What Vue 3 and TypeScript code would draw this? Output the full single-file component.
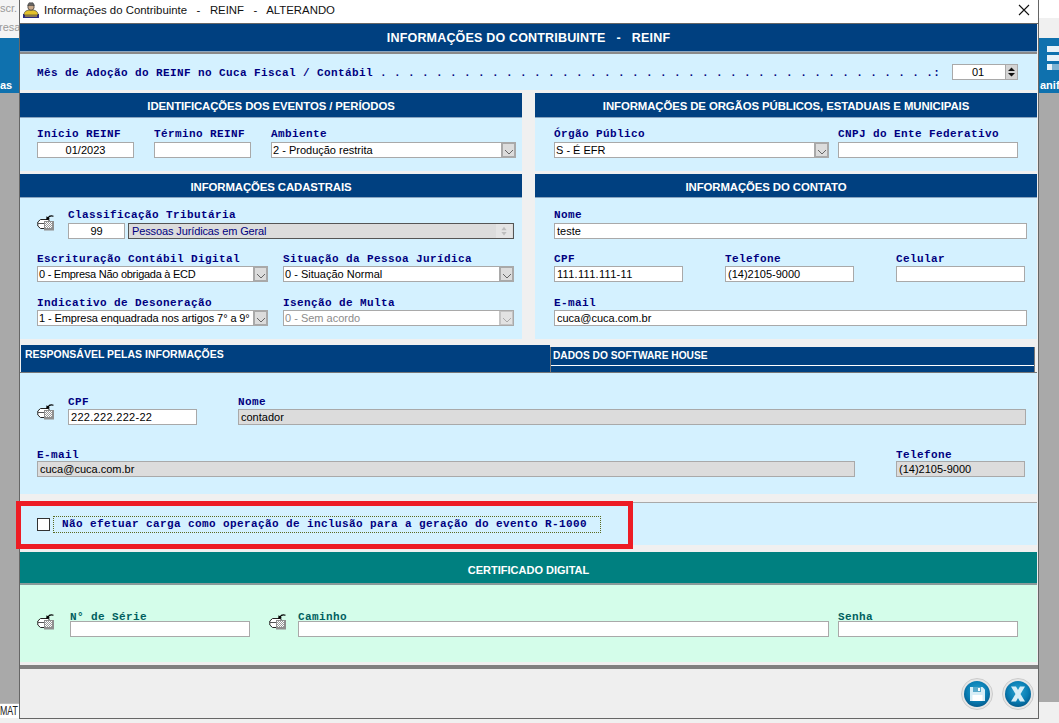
<script setup lang="ts">
const dots: string = '. '.repeat(39) + '.:'
const windowTitle: string = 'Informações do Contribuinte   -   REINF   -   ALTERANDO'
const mainTitle: string = 'INFORMAÇÕES DO CONTRIBUINTE   -   REINF'
</script>

<template>
  <div class="desktop">
    <svg class="sprite" width="0" height="0" aria-hidden="true">
      <defs>
        <pattern id="dither" width="2" height="2" patternUnits="userSpaceOnUse">
          <rect width="2" height="2" fill="#fff" />
          <rect width="1" height="1" fill="#999" />
          <rect x="1" y="1" width="1" height="1" fill="#999" />
        </pattern>
        <radialGradient id="blueBall" cx="50%" cy="40%" r="58%">
          <stop offset="0" stop-color="#2ba3cf" />
          <stop offset=".65" stop-color="#0a7fb5" />
          <stop offset="1" stop-color="#045f91" />
        </radialGradient>
        <symbol id="tray" viewBox="0 0 18 18">
          <path d="M3.500 6.500H12V15.500H3.500L.8 13V9z" fill="#fff" stroke="#222" stroke-width="1" />
          <path d="M1 10.500h7" fill="none" stroke="#555" stroke-width="1" />
          <rect x="7" y="8" width="10" height="9.500" fill="#8f8f8f" />
          <rect x="8" y="9" width="7" height="6" fill="url(#dither)" />
          <path d="M16.500 3.200C14 2.400 12 3 11 5" fill="none" stroke="#000" stroke-width="1.100" />
          <path d="M9.200 7l.3-3.800 3.300 2.200z" fill="#000" />
        </symbol>
      </defs>
    </svg>

    <div class="bg-side bg-left">
      <div class="bg-top">
        <span class="bg-t1">scr.</span>
        <span class="bg-t2">resa</span>
      </div>
      <div class="bg-blue"><span class="bg-cap">as</span></div>
      <div class="bg-gray"></div>
      <div class="bg-bottom"><span class="bg-mat">MAT</span></div>
    </div>

    <div class="bg-side bg-right">
      <div class="bg-top-r"></div>
      <div class="bg-blue bg-blue-r">
        <i class="bar"></i><i class="bar"></i><i class="bar bar-last"></i>
        <span class="bg-cap">anif</span>
      </div>
      <div class="bg-gray"></div>
      <div class="bg-bottom-r"></div>
    </div>

    <section class="dialog">
      <header class="titlebar">
        <svg class="app-ico" viewBox="0 0 16 16" width="16" height="16">
          <rect x="0" y="12" width="16" height="4" fill="#2b2b80" />
          <path d="M1 13c0-4 3-5 7-5s7 1 7 5z" fill="#e3c12c" stroke="#333" stroke-width=".6" />
          <circle cx="8" cy="5" r="3.200" fill="#c9a98a" stroke="#333" stroke-width=".7" />
          <path d="M4.500 3.500L6 .8h4l1.500 2.700z" fill="#666" stroke="#333" stroke-width=".5" />
          <rect x="2" y="13.500" width="12" height="1" fill="#e3c12c" />
        </svg>
        <span class="title-text">{{ windowTitle }}</span>
        <svg class="close" viewBox="0 0 12 12" width="12" height="12">
          <path d="M1 1l10 10M11 1L1 11" stroke="#111" stroke-width="1.100" fill="none" />
        </svg>
      </header>

      <div class="body">
        <h1 class="main-head">{{ mainTitle }}</h1>
        <div class="rule2"></div>

        <div class="panel mes">
          <span class="lbl">Mês de Adoção do REINF no Cuca Fiscal / Contábil</span>
          <span class="lbl dots">{{ dots }}</span>
          <div class="spin">
            <span class="spin-val">01</span>
            <span class="spin-btn">
              <svg viewBox="0 0 11 14" width="11" height="14">
                <rect width="11" height="14" fill="#d4d4d4" />
                <path d="M5.500 2.500L2 6h7zM5.500 11.500L2 8h7z" fill="#111" />
              </svg>
            </span>
          </div>
        </div>

        <div class="cols first">
          <div>
            <h2 class="sec-head">IDENTIFICAÇÕES DOS EVENTOS / PERÍODOS</h2>
            <div class="panel p-ident pad-l">
              <div class="grid g-ident">
                <div><div class="lbl">Início REINF</div><div class="in center">01/2023</div></div>
                <div><div class="lbl">Término REINF</div><div class="in"></div></div>
                <div>
                  <div class="lbl">Ambiente</div>
                  <div class="in combo">2 - Produção restrita<span class="arrow"><svg viewBox="0 0 12 8" width="12" height="8"><path d="M2 2l4 4 4-4" fill="none" stroke="#666" /></svg></span></div>
                </div>
              </div>
            </div>
          </div>
          <div>
            <h2 class="sec-head">INFORMAÇÕES DE ORGÃOS PÚBLICOS, ESTADUAIS E MUNICIPAIS</h2>
            <div class="panel p-ident pad-r">
              <div class="grid g-orgao">
                <div>
                  <div class="lbl">Órgão Público</div>
                  <div class="in combo">S - É EFR<span class="arrow"><svg viewBox="0 0 12 8" width="12" height="8"><path d="M2 2l4 4 4-4" fill="none" stroke="#666" /></svg></span></div>
                </div>
                <div><div class="lbl">CNPJ do Ente Federativo</div><div class="in"></div></div>
              </div>
            </div>
          </div>
        </div>

        <div class="cols second">
          <div>
            <h2 class="sec-head short">INFORMAÇÕES CADASTRAIS</h2>
            <div class="panel p-cad pad-l">
              <div class="grid g-class">
                <svg class="tray"><use href="#tray" /></svg>
                <div class="class-field">
                  <div class="lbl">Classificação Tributária</div>
                  <div class="class-inputs">
                    <div class="in center code">99</div>
                    <div class="in dis-combo">Pessoas Jurídicas em Geral
                      <span class="up-down">
                        <svg viewBox="0 0 12 16" width="12" height="14"><path d="M6 3L3 7h6zM6 13l-3-4h6z" fill="#bdbdbd" /></svg>
                      </span>
                    </div>
                  </div>
                </div>
              </div>
              <div class="grid g-cad row2">
                <div>
                  <div class="lbl">Escrituração Contábil Digital</div>
                  <div class="in combo sq">0 - Empresa Não obrigada à ECD<span class="arrow"><svg viewBox="0 0 12 8" width="12" height="8"><path d="M2 2l4 4 4-4" fill="none" stroke="#666" /></svg></span></div>
                </div>
                <div>
                  <div class="lbl">Situação da Pessoa Jurídica</div>
                  <div class="in combo">0 - Situação Normal<span class="arrow"><svg viewBox="0 0 12 8" width="12" height="8"><path d="M2 2l4 4 4-4" fill="none" stroke="#666" /></svg></span></div>
                </div>
              </div>
              <div class="grid g-cad row3">
                <div>
                  <div class="lbl">Indicativo de Desoneração</div>
                  <div class="in combo sq2">1 - Empresa enquadrada nos artigos 7° a 9°<span class="arrow"><svg viewBox="0 0 12 8" width="12" height="8"><path d="M2 2l4 4 4-4" fill="none" stroke="#666" /></svg></span></div>
                </div>
                <div>
                  <div class="lbl">Isenção de Multa</div>
                  <div class="in combo disabled">0 - Sem acordo<span class="arrow"><svg viewBox="0 0 12 8" width="12" height="8"><path d="M2 2l4 4 4-4" fill="none" stroke="#aaa" /></svg></span></div>
                </div>
              </div>
            </div>
          </div>
          <div>
            <h2 class="sec-head short contact">INFORMAÇÕES DO CONTATO</h2>
            <div class="panel p-cad pad-r">
              <div class="wide"><div class="lbl">Nome</div><div class="in">teste</div></div>
              <div class="grid g-cont row2">
                <div><div class="lbl">CPF</div><div class="in wd">111.111.111-11</div></div>
                <div><div class="lbl">Telefone</div><div class="in">(14)2105-9000</div></div>
                <div><div class="lbl">Celular</div><div class="in"></div></div>
              </div>
              <div class="wide row3"><div class="lbl">E-mail</div><div class="in">cuca@cuca.com.br</div></div>
            </div>
          </div>
        </div>

        <div class="tabs">
          <div class="tab-left">RESPONSÁVEL PELAS INFORMAÇÕES</div>
          <div class="tab-right"><div class="tab-inner">DADOS DO SOFTWARE HOUSE</div></div>
        </div>

        <div class="panel p-resp">
          <div class="grid g-resp1">
            <svg class="tray tray-mid"><use href="#tray" /></svg>
            <div><div class="lbl">CPF</div><div class="in wd">222.222.222-22</div></div>
            <div><div class="lbl">Nome</div><div class="in gray">contador</div></div>
          </div>
          <div class="grid g-resp2">
            <div><div class="lbl">E-mail</div><div class="in gray">cuca@cuca.com.br</div></div>
            <div><div class="lbl">Telefone</div><div class="in gray">(14)2105-9000</div></div>
          </div>
        </div>

        <div class="rule1"></div>
        <div class="panel p-check">
          <span class="check"></span>
          <span class="focus lbl">Não efetuar carga como operação de inclusão para a geração do evento R-1000</span>
          <div class="red"></div>
        </div>

        <h2 class="teal-head">CERTIFICADO DIGITAL</h2>
        <div class="panel mint">
          <div class="grid g-mint">
            <svg class="tray tray-m"><use href="#tray" /></svg>
            <div><div class="lbl lbl-teal tight">N° de Série</div><div class="in"></div></div>
            <svg class="tray tray-m tray-2"><use href="#tray" /></svg>
            <div><div class="lbl lbl-teal tight">Caminho</div><div class="in"></div></div>
            <div class="senha"><div class="lbl lbl-teal tight">Senha</div><div class="in"></div></div>
          </div>
        </div>
      </div>

      <footer class="footer">
        <svg class="btn" viewBox="0 0 32 32" width="32" height="32">
          <circle cx="16" cy="16" r="15.500" fill="#e6e6e6" stroke="#ccc" />
          <circle cx="16" cy="16" r="13" fill="url(#blueBall)" />
          <path d="M9 9h12.500L24 11.500V23H9z" fill="#d8eef7" />
          <rect x="12" y="9" width="8" height="5" fill="#5aaacb" />
          <rect x="17" y="10" width="2" height="3" fill="#fff" />
          <rect x="11.500" y="17" width="10" height="6" fill="#fff" />
        </svg>
        <svg class="btn" viewBox="0 0 32 32" width="32" height="32">
          <circle cx="16" cy="16" r="15.500" fill="#e6e6e6" stroke="#ccc" />
          <circle cx="16" cy="16" r="13" fill="url(#blueBall)" />
          <path d="M9 8.500h5l2 3.500 2-3.500h5l-4.500 7.500 4.500 7.500h-5l-2-3.500-2 3.500H9l4.500-7.500z" fill="#d8eef7" />
        </svg>
      </footer>
    </section>
  </div>
</template>

<style scoped>
* { box-sizing: border-box; }
.desktop {
  position: relative;
  width: 1059px;
  height: 723px;
  background: #f0f0f0;
  overflow: hidden;
  font-family: "Liberation Sans", Arial, sans-serif;
}
.sprite { position: absolute; }

.bg-side { position: absolute; top: 0; display: flex; flex-direction: column; height: 718px; overflow: hidden; }
.bg-left { left: 0; width: 19px; }
.bg-right { left: 1039px; width: 20px; }
.bg-top { height: 38px; background: #f4f4f4; position: relative; font-size: 11px; color: #999; }
.bg-t1 { position: absolute; left: 0; top: 2px; }
.bg-t2 { position: absolute; left: -1px; top: 21px; }
.bg-top-r { height: 38px; background: linear-gradient(#fff 18px, #f0f0f0 18px); }
.bg-blue { height: 55px; background: #0f71ae; position: relative; flex: none; }
.bg-cap { position: absolute; top: 41px; left: 0; color: #fff; font-size: 11px; font-weight: bold; white-space: nowrap; }
.bg-blue-r { padding: 8px 0 0 8px; }
.bg-blue-r .bg-cap { left: 1px; }
.bar { display: block; height: 6px; background: #e8f2f8; margin-bottom: 3px; width: 12px; }
.bar-last { background: linear-gradient(90deg, #e8f2f8 0 40%, #7db4d4 40%); }
.bg-gray { flex: 1; background: #a9a9a9; }
.bg-bottom { height: 15px; background: #fff; border-top: 1px solid #bbb; position: relative; }
.bg-mat { position: absolute; left: 0; top: -1px; font-size: 13px; color: #222; transform: scaleX(.68); transform-origin: left center; }
.bg-right .bg-bottom-r { height: 16px; background: #f0f0f0; }

.dialog {
  position: absolute;
  left: 19px;
  top: 0;
  width: 1020px;
  height: 719px;
  display: flex;
  flex-direction: column;
  background: #f0f0f0;
  border-left: 1px solid #666;
  border-right: 1px solid #666;
  border-bottom: 1px solid #666;
}
.titlebar {
  height: 24px;
  flex: none;
  background: #fff;
  border-bottom: 1px solid #666;
  display: flex;
  align-items: center;
  padding: 0 8px 4px 3px;
}
.app-ico { flex: none; }
.title-text {
  margin-left: 5px;
  font-size: 11.400px;
  white-space: pre;
  color: #111;
  flex: 1;
}
.close { flex: none; }

.body { flex: none; height: 641px; display: flex; flex-direction: column; padding-right: 1px; position: relative; }

.main-head {
  margin: 0;
  height: 28px;
  flex: none;
  background: #004080;
  border-bottom: 1px solid #8aa5c0;
  color: #fff;
  font-size: 12.500px;
  font-weight: bold;
  line-height: 29px;
  text-align: center;
  letter-spacing: .18px;
  white-space: pre;
}
.rule2 { height: 2px; background: #8a8a8a; flex: none; }

.panel { background: #d4f1ff; }
.lbl {
  display: block;
  font-family: "Liberation Mono", "Courier New", monospace;
  font-weight: bold;
  font-size: 11px;
  letter-spacing: .4px;
  line-height: 14px;
  height: 12px;
  color: #000080;
  white-space: nowrap;
  margin-bottom: 3px;
}
.row2 .lbl, .row3 .lbl, .g-resp1 .lbl { line-height: 16px; }
.g-resp2 .lbl, .tight { line-height: 18px; }
.lbl-teal { color: #005f5f; }
.tight { margin-bottom: 1px; }

.mes { height: 36px; flex: none; display: flex; align-items: center; padding-left: 17px; }
.mes .lbl { margin: 0; }
.dots { white-space: pre; margin-left: 7px !important; flex: none; width: 572px; }
.spin {
  width: 66px;
  height: 16px;
  background: #fff;
  border: 1px solid #a9a9a9;
  display: flex;
  font-size: 11px;
  color: #000;
  line-height: 15px;
  text-align: center;
}
.spin-val { flex: 1; padding-right: 2px; }
.spin-btn { width: 12px; border-left: 1px solid #a9a9a9; display: block; }
.spin-btn svg { display: block; }

.cols { display: grid; grid-template-columns: 502px 502px; column-gap: 13px; flex: none; }
.first { margin-top: 3px; }
.second { margin-top: 3px; }

.sec-head {
  margin: 0;
  height: 25px;
  background: #004080;
  border-bottom: 1px solid #8aa5c0;
  color: #fff;
  font-size: 11.400px;
  font-weight: bold;
  line-height: 26px;
  text-align: center;
  letter-spacing: -.1px;
  white-space: nowrap;
}
.short { height: 24px; line-height: 27px; }
.contact { padding-right: 40px; }

.p-ident { height: 53px; padding-top: 9px; }
.p-cad { height: 141px; padding-top: 10px; }
.pad-l { padding-left: 17px; }
.pad-r { padding-left: 19px; }

.grid { display: grid; }
.g-ident { grid-template-columns: 97px 97px 245px; column-gap: 20px; }
.g-orgao { grid-template-columns: 275px 180px; column-gap: 9px; }
.g-class { grid-template-columns: 31px 446px; }
.g-cad { grid-template-columns: 231px 231px; column-gap: 15px; }
.g-cont { grid-template-columns: 129px 129px 129px; column-gap: 42px; }
.row2 { margin-top: 12px; }
.row3 { margin-top: 13px; }
.wide { width: 473px; }

.in {
  height: 16px;
  background: #fff;
  border: 1px solid #a9a9a9;
  font-size: 11px;
  line-height: 15px;
  color: #000;
  padding-left: 2px;
  white-space: nowrap;
  overflow: hidden;
  position: relative;
}
.center { text-align: center; padding-left: 0; }
.gray { background: #dcdcdc; }
.combo { padding-right: 16px; padding-left: 1px; }
.sq { letter-spacing: -.27px; }
.sq2 { letter-spacing: -.1px; }
.wd { letter-spacing: .3px; }
.arrow {
  position: absolute;
  right: -1px;
  top: -1px;
  bottom: -1px;
  width: 15px;
  background: #dcdcdc;
  border: 2px solid #a9a9a9;
  display: flex;
  align-items: center;
  justify-content: center;
  letter-spacing: 0;
}
.arrow svg { margin-top: 3px; flex: none; }
.disabled { color: #8c8c8c; }
.disabled .arrow { background: #e2e2e2; border-color: #c4c4c4; }

.tray { width: 18px; height: 18px; display: block; margin-top: 5px; }
.class-inputs { display: flex; gap: 3px; }
.code { width: 57px; flex: none; }
.dis-combo {
  flex: 1;
  background: #dcdcdc;
  border-color: #555;
  color: #000080;
  padding-left: 3px;
  letter-spacing: -.12px;
}
.up-down { position: absolute; right: 1px; top: 0; width: 16px; height: 14px; background: #e4e4e4; display: block; text-align: center; }
.up-down svg { display: block; margin: 0 auto; }

.tabs { display: flex; height: 28px; flex: none; margin-top: 6px; padding-left: 1px; border-bottom: 1px solid #777; }
.tab-left {
  width: 529px;
  flex: none;
  height: 27px;
  background: #004080;
  color: #fff;
  font-size: 10.500px;
  font-weight: bold;
  padding: 2px 0 0 4px;
  line-height: 14px;
  white-space: nowrap;
}
.tab-right {
  width: 485px;
  flex: none;
  margin-top: 2px;
  height: 25px;
  background: #004080;
  border-left: 1px solid #777;
  border-right: 1px solid #777;
}
.tab-inner {
  height: 19px;
  padding-left: 2px;
  background: #004080;
  border-bottom: 1px solid #fff;
  color: #fff;
  font-size: 10.200px;
  font-weight: bold;
  line-height: 18px;
  white-space: nowrap;
}

.p-resp { height: 121px; flex: none; margin-top: 0; padding: 21px 0 0 17px; }
.g-resp1 { grid-template-columns: 31px 129px 788px; }
.g-resp1 > :nth-child(3) { margin-left: 41px; width: 788px; }
.tray-mid { margin-top: 8px; }
.g-resp2 { grid-template-columns: 818px 129px; column-gap: 41px; margin-top: 21px; }

.rule1 { height: 1px; background: #a9a9a9; margin-top: 8px; flex: none; }
.p-check {
  height: 42px;
  flex: none;
  position: relative;
  display: flex;
  align-items: center;
  padding-left: 17px;
}
.check { width: 13px; height: 13px; background: #fff; border: 1px solid #333; flex: none; margin-top: 1px; }
.focus {
  margin: 0 0 0 3px;
  width: 548px;
  height: 17px;
  line-height: 15px;
  padding-left: 8px;
  border: 1px dotted #5a6a20;
  background: #d4f1ff;
}
.red {
  position: absolute;
  left: -4px;
  top: -2px;
  width: 617px;
  height: 48px;
  border: 5px solid #ed1c24;
  pointer-events: none;
}

.teal-head {
  margin: 7px 0 0;
  height: 33px;
  flex: none;
  background: #008080;
  border-bottom: 2px solid #8a9a9a;
  color: #fff;
  font-size: 11px;
  font-weight: bold;
  line-height: 36px;
  text-align: center;
}
.mint { background: #d4fdea; height: 77px; flex: none; padding: 23px 0 0 17px; }
.g-mint { grid-template-columns: 33px 180px 48px 531px 189px; }
.tray-2 { margin-left: 19px; }
.senha { margin-left: 9px; }
.tray-m { margin-top: 4px; }

.footer {
  flex: 1;
  margin-top: 0;
  border-top: 4px solid #808080;
  display: flex;
  justify-content: flex-end;
  align-items: center;
  gap: 9px;
  padding: 0 4px 0 0;
  background: #efefef;
}
.btn { display: block; }
</style>
